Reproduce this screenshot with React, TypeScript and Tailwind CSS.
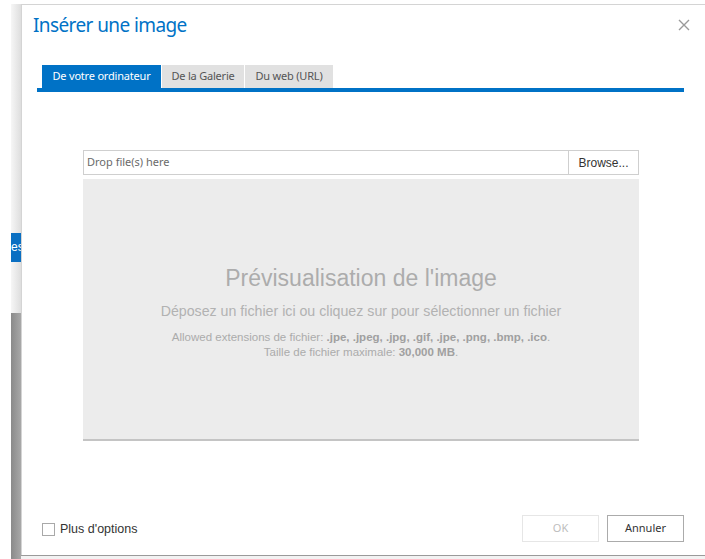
import React from "react";

const segoe = { fontFamily: '"Noto Sans", "Open Sans", sans-serif' };
const arial = { fontFamily: '"Liberation Sans", Arial, sans-serif' };

function CloseIcon() {
  return (
    <svg width="12" height="12" viewBox="0 0 12 12" className="block">
      <path d="M1 1 L11 11 M11 1 L1 11" stroke="#9a9a9a" strokeWidth="1.4" fill="none" />
    </svg>
  );
}

const tabs = [
  { label: "De votre ordinateur", w: "w-[119px]" },
  { label: "De la Galerie", w: "w-[82px]" },
  { label: "Du web (URL)", w: "w-[88px]" },
];

function Tabs() {
  return (
    <div>
      <div className="flex gap-[1px] pl-[5px] h-[23px]">
        {tabs.map((t, i) => (
          <div
            key={t.label}
            style={segoe}
            className={
              i === 0
                ? `${t.w} flex items-center justify-center text-[11px] tracking-[-0.2px] text-white bg-[#0072c6]`
                : `${t.w} flex items-center justify-center text-[11px] tracking-[-0.2px] text-[#555] bg-[#e1e1e1]`
            }
          >
            {t.label}
          </div>
        ))}
      </div>
      <div className="h-[4px] bg-[#0072c6]" />
    </div>
  );
}

function Preview() {
  return (
    <div className="h-[262px] mt-[4px] pt-[6px] bg-[#ececec] border-b-2 border-[#c4c4c4] flex flex-col items-center justify-center text-center" style={arial}>
      <div className="text-[23px] leading-[26px] text-[#acacac]">Prévisualisation de l'image</div>
      <div className="mt-[11px] text-[14.2px] leading-[18px] text-[#b2b2b2]">
        Déposez un fichier ici ou cliquez sur pour sélectionner un fichier
      </div>
      <div className="mt-[10px] text-[11.5px] leading-[15px] text-[#ababab]">
        Allowed extensions de fichier: <b className="text-[#a0a0a0]">.jpe, .jpeg, .jpg, .gif, .jpe, .png, .bmp, .ico</b>.
        <br />
        Taille de fichier maximale: <b className="text-[#a0a0a0]">30,000 MB</b>.
      </div>
    </div>
  );
}

export default function App() {
  return (
    <div className="w-[705px] h-[559px] bg-white flex overflow-hidden">
      {/* page background peeking out on the left */}
      <div className="w-[11px] bg-white" />
      <div className="w-[10px] flex flex-col">
        <div className="h-[4px] bg-white" />
        <div className="h-[229px] bg-gradient-to-r from-[#f6f6f6] to-[#dedede]" />
        <div className="h-[29px] bg-[#0a6fc2] text-white text-[12px] leading-[29px] overflow-hidden whitespace-nowrap" style={arial}>
          es
        </div>
        <div className="h-[51px] bg-gradient-to-r from-[#f6f6f6] to-[#dedede]" />
        <div className="flex-1 bg-gradient-to-r from-[#8a8a8a] to-[#a8a8a8]" />
      </div>

      {/* dialog */}
      <div className="flex-1 flex flex-col">
        <div className="h-[4px] bg-white" />
        <div className="flex-1 flex flex-col bg-white border-t border-l border-[#d4d4d4] relative">
          <div className="pl-[11px] pt-[6px] h-[33px]">
            <div style={segoe} className="text-[19px] leading-[28px] tracking-[-0.6px] text-[#0072c6]">
              Insérer une image
            </div>
          </div>
          <button className="absolute right-[15px] top-[14px]">
            <CloseIcon />
          </button>

          <div className="pl-[15px] pr-[21px] mt-[27px]">
            <Tabs />
            <div className="pl-[46px] pr-[45px] mt-[58px]">
              <div className="flex h-[25px] border border-[#cfcfcf]">
                <div style={segoe} className="flex-1 flex items-center pl-[3px] text-[11px] text-[#6a6a6a]">
                  Drop file(s) here
                </div>
                <div style={arial} className="w-[70px] border-l border-[#cfcfcf] flex items-center justify-center text-[12px] text-[#333]">
                  Browse...
                </div>
              </div>
              <Preview />
            </div>
          </div>

          <div className="flex-1" />

          <div className="flex items-center justify-between pl-[20px] pr-[21px] pb-[13px]">
            <label className="flex items-center gap-[5px] pt-[2px]">
              <span className="w-[13px] h-[13px] border border-[#a9a9a9] bg-white" />
              <span style={arial} className="text-[12.5px] text-[#333]">Plus d'options</span>
            </label>
            <div className="flex gap-[8px]">
              <button style={segoe} className="w-[77px] h-[27px] border border-[#e6e6e6] text-[11px] text-[#bdbdbd] bg-white">
                OK
              </button>
              <button style={segoe} className="w-[77px] h-[27px] border border-[#ababab] text-[11px] text-[#333] bg-white">
                Annuler
              </button>
            </div>
          </div>
        </div>
        <div className="h-[4px] border-t border-[#9a9a9a] bg-[#f2f2f2]" />
      </div>
    </div>
  );
}
